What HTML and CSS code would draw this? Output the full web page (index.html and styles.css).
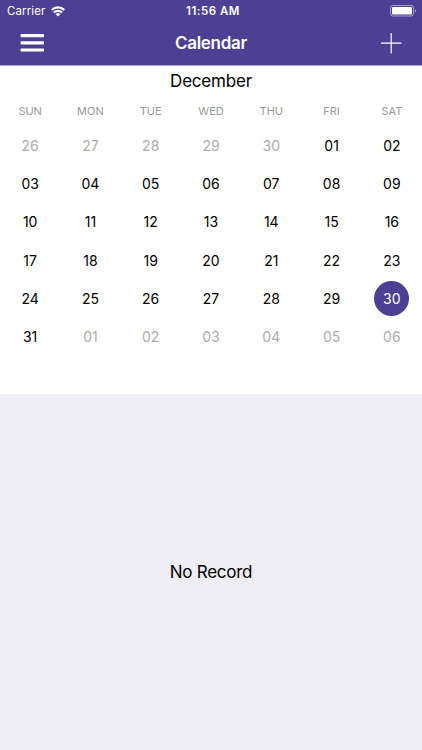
FILE: index.html
```html
<!DOCTYPE html>
<html lang="en">
<head>
    <meta charset="UTF-8">
    <meta name="viewport" content="width=device-width, initial-scale=1.0">
    <title>Calendar</title>
    <link rel="stylesheet" href="styles.css">
</head>
<body>
    <header class="header">
        <!-- Status bar -->
        <div class="status-bar">
            <div class="carrier">
                <span>Carrier</span>
                <svg class="wifi" width="14" height="11" viewBox="0 0 14 11" fill="none" stroke="#fff" stroke-width="2.1">
                    <path d="M0.7 4a8.9 8.9 0 0 1 12.6 0"/>
                    <path d="M2.9 6.6a5.7 5.7 0 0 1 8.2 0"/>
                    <path d="M7 10.6L4.7 8.3a3.2 3.2 0 0 1 4.6 0z" fill="#fff" stroke="none"/>
                </svg>
            </div>
            <div class="time">11:56 AM</div>
            <div class="battery">
                <svg width="27" height="12" viewBox="0 0 27 12">
                    <rect x="0.5" y="0.5" width="23" height="10.5" rx="2.4" fill="none" stroke="#fff" stroke-opacity="0.5"/>
                    <rect x="2" y="2" width="20" height="7.5" rx="1" fill="#fff"/>
                    <path d="M25 4v3.6a2 2 0 0 0 0-3.6z" fill="#fff" fill-opacity="0.5"/>
                </svg>
            </div>
        </div>

        <!-- Navigation bar -->
        <div class="nav-bar">
            <svg class="menu" width="24" height="18" viewBox="0 0 24 18" fill="#fff">
                <rect x="0.6" y="0" width="23.4" height="3.2" rx="0.6"/>
                <rect x="0.6" y="7.2" width="23.4" height="3.2" rx="0.6"/>
                <rect x="0.6" y="14.4" width="23.4" height="3.2" rx="0.6"/>
            </svg>
            <h1 class="title">Calendar</h1>
            <svg class="add" width="21" height="21" viewBox="0 0 21 21" stroke="#fff" stroke-width="1.2">
                <path d="M10.2 0v20.5M0 10.2h20.5"/>
            </svg>
        </div>
    </header>

    <!-- Month -->
    <section class="calendar">
        <h2 class="month">December</h2>
        <div class="weekdays">
            <span>SUN</span><span>MON</span><span>TUE</span><span>WED</span><span>THU</span><span>FRI</span><span>SAT</span>
        </div>
        <div class="days">
            <span class="other">26</span><span class="other">27</span><span class="other">28</span><span class="other">29</span><span class="other">30</span><span>01</span><span>02</span>
            <span>03</span><span>04</span><span>05</span><span>06</span><span>07</span><span>08</span><span>09</span>
            <span>10</span><span>11</span><span>12</span><span>13</span><span>14</span><span>15</span><span>16</span>
            <span>17</span><span>18</span><span>19</span><span>20</span><span>21</span><span>22</span><span>23</span>
            <span>24</span><span>25</span><span>26</span><span>27</span><span>28</span><span>29</span><span class="selected">30</span>
            <span>31</span><span class="other">01</span><span class="other">02</span><span class="other">03</span><span class="other">04</span><span class="other">05</span><span class="other">06</span>
        </div>
    </section>

    <!-- Records of the selected day -->
    <main class="records">
        <p class="empty">No Record</p>
    </main>
</body>
</html>
```

FILE: styles.css
```css
/* General Styling */
* {
    box-sizing: border-box;
}
body {
    display: flex;
    flex-direction: column;
    height: 100vh;
    margin: 0;
    font-family: Inter, "Liberation Sans", sans-serif;
    background: #efeef5;
    color: #000;
}

/* Header */
.header {
    height: 66px;
    background: #4c3f94;
    border-bottom: 1px solid #a7a3c4;
    color: #fff;
}
.status-bar {
    display: grid;
    grid-template-columns: 1fr auto 1fr;
    align-items: center;
    height: 22px;
    padding: 0 5px 0 7px;
}
.carrier {
    display: flex;
    align-items: center;
    gap: 6px;
    font-size: 11.5px;
    letter-spacing: 0.1px;
}
.time {
    padding-left: 2px;
    font-size: 11.5px;
    font-weight: 600;
    letter-spacing: 0.5px;
}
.battery {
    display: flex;
    justify-content: flex-end;
}
.nav-bar {
    display: flex;
    align-items: center;
    justify-content: space-between;
    height: 42px;
    padding: 0 20px;
}
.title {
    margin: 0;
    padding-right: 3px;
    font-size: 17px;
    font-weight: 600;
    letter-spacing: -0.3px;
}

/* Calendar */
.calendar {
    height: 328px;
    background: #fff;
}
.month {
    margin: 0;
    font-size: 17px;
    font-weight: 400;
    letter-spacing: -0.2px;
    line-height: 31px;
    text-align: center;
}
.weekdays,
.days {
    display: grid;
    grid-template-columns: repeat(7, 1fr);
    justify-items: center;
    align-items: center;
}
.weekdays {
    height: 28px;
    font-size: 11px;
    color: #98989d;
}
.days {
    grid-auto-rows: 38.2px;
    padding-top: 1.4px;
    font-size: 14px;
}
.other {
    color: #adadad;
}
.selected {
    width: 35px;
    height: 35px;
    border-radius: 50%;
    background: #4c3f94;
    color: #fff;
    line-height: 35px;
    text-align: center;
}

/* Records */
.records {
    display: flex;
    flex: 1;
    align-items: center;
    justify-content: center;
}
.empty {
    margin: 0;
    font-size: 17px;
    letter-spacing: -0.25px;
}
```
